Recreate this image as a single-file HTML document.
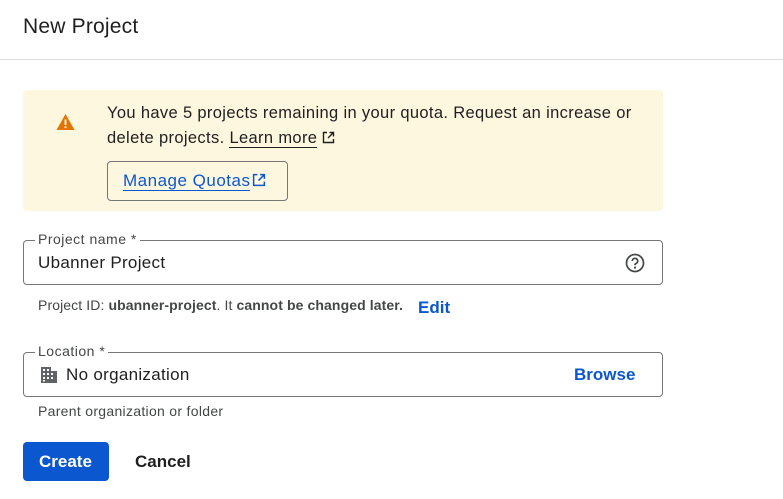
<!DOCTYPE html>
<html><head><style>
body{margin:0;width:783px;height:499px;background:#fff;font-family:"Liberation Sans",Arial,sans-serif;color:#1f1f1f;position:relative;overflow:hidden}
.a{position:absolute;white-space:nowrap}
.lbl{background:#fff;padding:0 3px;font-size:14px;color:#444746;line-height:16px;letter-spacing:0.5px}
.f{position:absolute;left:23px;width:638px;height:43px;border:1px solid #747775;border-radius:4px}
.blue{color:#0b57d0}
</style></head><body>
<div class="a" style="left:23px;top:15px;font-size:21px;color:#1f1f1f;letter-spacing:0.2px">New Project</div>
<div class="a" style="left:0;top:59px;width:783px;height:1px;background:#dadce0"></div>

<div class="a" style="left:23px;top:90px;width:640px;height:121px;background:#fef7e0;border-radius:4px"></div>
<svg class="a" style="left:56px;top:113px" width="19" height="18" viewBox="0 0 19 18"><path d="M9.5 1 L18.5 17 L0.5 17 Z" fill="#e37400"/><rect x="8.6" y="6.5" width="1.8" height="5.5" fill="#fff"/><rect x="8.6" y="13.3" width="1.8" height="1.8" fill="#fff"/></svg>
<div class="a" style="left:107px;top:101px;font-size:16.5px;line-height:25px;color:#1f1f1f;letter-spacing:0.35px">You have 5 projects remaining in your quota. Request an increase or<br>delete projects. <span style="border-bottom:1px solid #1f1f1f">Learn more</span> <svg width="13" height="13" viewBox="0 0 13 13" style="vertical-align:-1px"><path d="M5 1.5H1.5v10h10V8M7.5 1.5h4v4M11.5 1.5 6 7" fill="none" stroke="#1f1f1f" stroke-width="1.4"/></svg></div>
<div class="a" style="left:107px;top:161px;width:179px;height:38px;border:1px solid #747775;border-radius:4px"></div>
<div class="a blue" style="left:123px;top:171px;font-size:17px;line-height:20px;letter-spacing:0.5px"><span style="border-bottom:1px solid #0b57d0">Manage Quotas</span><svg width="14" height="14" viewBox="0 0 13 13" style="vertical-align:-1px;margin-left:2px"><path d="M5 1.5H1.5v10h10V8M7.5 1.5h4v4M11.5 1.5 6 7" fill="none" stroke="#0b57d0" stroke-width="1.4"/></svg></div>

<div class="f" style="top:240px"></div>
<div class="a lbl" style="left:35px;top:231px">Project name *</div>
<div class="a" style="left:38px;top:253px;font-size:17px;letter-spacing:0.3px">Ubanner Project</div>
<svg class="a" style="left:625px;top:253px" width="20" height="20" viewBox="0 0 20 20"><circle cx="10" cy="10" r="8.5" fill="none" stroke="#444746" stroke-width="1.7"/><path d="M7.3 8a2.7 2.7 0 1 1 3.7 2.5c-.8.4-1 .9-1 1.7" fill="none" stroke="#444746" stroke-width="1.7"/><circle cx="10" cy="14.6" r="1.1" fill="#444746"/></svg>
<div class="a" style="left:38px;top:297px;font-size:14px;color:#444746;letter-spacing:0.1px">Project ID: <b>ubanner-project</b>. It <b>cannot be changed later.</b></div>
<div class="a blue" style="left:418px;top:298px;font-size:17px;font-weight:bold">Edit</div>

<div class="f" style="top:352px"></div>
<div class="a lbl" style="left:35px;top:343px">Location *</div>
<svg class="a" style="left:40px;top:366px" width="18" height="18" viewBox="0 0 18 18"><path d="M1 1h10v4h6v12H1z" fill="#5f6368"/><g fill="#fff"><rect x="3" y="3" width="2" height="2"/><rect x="7" y="3" width="2" height="2"/><rect x="3" y="7" width="2" height="2"/><rect x="7" y="7" width="2" height="2"/><rect x="3" y="11" width="2" height="2"/><rect x="7" y="11" width="2" height="2"/><rect x="11" y="7" width="2" height="2"/><rect x="11" y="11" width="2" height="2"/><rect x="3" y="14" width="2" height="1.5"/></g></svg>
<div class="a" style="left:66px;top:365px;font-size:17px;letter-spacing:0.3px">No organization</div>
<div class="a blue" style="left:574px;top:365px;font-size:17px;font-weight:bold">Browse</div>
<div class="a" style="left:38px;top:403px;font-size:14px;color:#444746;letter-spacing:0.3px">Parent organization or folder</div>

<div class="a" style="left:23px;top:442px;width:86px;height:39px;background:#0b57d0;border-radius:4px"></div>
<div class="a" style="left:39px;top:452px;font-size:17px;color:#fff;font-weight:bold">Create</div>
<div class="a" style="left:135px;top:452px;font-size:17px;font-weight:bold;color:#1f1f1f">Cancel</div>
</body></html>
